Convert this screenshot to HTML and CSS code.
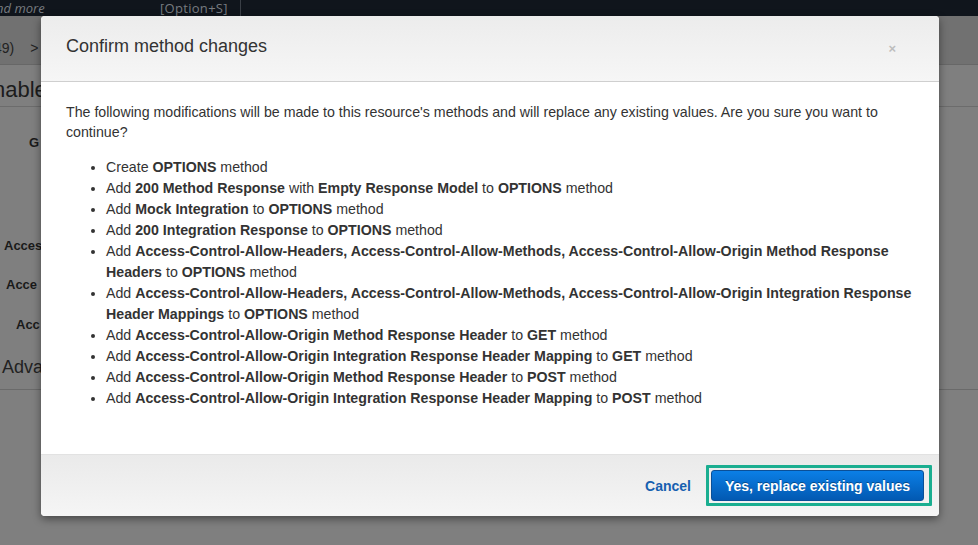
FILE: index.html
```html
<!DOCTYPE html>
<html>
<head>
<meta charset="utf-8">
<link rel="stylesheet" href="styles.css">
</head>
<body>
<div class="page">
  <div class="topbar">
    <span class="search-hint">nd more</span>
    <span class="shortcut">[Option+S]</span>
    <span class="divider"></span>
  </div>
  <div class="crumbs"><span>49)</span><span class="sep">&gt;</span></div>
  <div class="content">
    <div class="page-title">nable</div>
    <div class="form">
      <div class="row r1">G</div>
      <div class="row r2">Acces</div>
      <div class="row r3">Acce</div>
      <div class="row r4">Acc</div>
      <div class="adv">Adva</div>
    </div>
  </div>
</div>

<div class="modal">
  <div class="modal-header">
    <h2 class="modal-title">Confirm method changes</h2>
    <span class="close">×</span>
  </div>
  <div class="modal-body">
    <p>The following modifications will be made to this resource's methods and will replace any existing values. Are you sure you want to continue?</p>
    <ul>
      <li>Create <b>OPTIONS</b> method</li>
      <li>Add <b>200 Method Response</b> with <b>Empty Response Model</b> to <b>OPTIONS</b> method</li>
      <li>Add <b>Mock Integration</b> to <b>OPTIONS</b> method</li>
      <li>Add <b>200 Integration Response</b> to <b>OPTIONS</b> method</li>
      <li>Add <b>Access-Control-Allow-Headers, Access-Control-Allow-Methods, Access-Control-Allow-Origin Method Response Headers</b> to <b>OPTIONS</b> method</li>
      <li>Add <b>Access-Control-Allow-Headers, Access-Control-Allow-Methods, Access-Control-Allow-Origin Integration Response Header Mappings</b> to <b>OPTIONS</b> method</li>
      <li>Add <b>Access-Control-Allow-Origin Method Response Header</b> to <b>GET</b> method</li>
      <li>Add <b>Access-Control-Allow-Origin Integration Response Header Mapping</b> to <b>GET</b> method</li>
      <li>Add <b>Access-Control-Allow-Origin Method Response Header</b> to <b>POST</b> method</li>
      <li>Add <b>Access-Control-Allow-Origin Integration Response Header Mapping</b> to <b>POST</b> method</li>
    </ul>
  </div>
  <div class="modal-footer">
    <a class="cancel">Cancel</a>
    <div class="focus-ring"><button class="primary">Yes, replace existing values</button></div>
  </div>
</div>
</body>
</html>
```

FILE: styles.css
```css
* { box-sizing: border-box; }
html, body { margin: 0; padding: 0; }
body {
  width: 978px;
  height: 545px;
  overflow: hidden;
  background: #7f7f7f;
  font-family: "Liberation Sans", Arial, sans-serif;
  position: relative;
}
.page { display: flex; flex-direction: column; height: 545px; }
.topbar {
  height: 16px;
  background: #10151c;
  display: flex;
  align-items: center;
  font-family: "Open Sans", "Liberation Sans", sans-serif;
  font-size: 13px;
  color: #777b80;
  overflow: hidden;
}
.search-hint { font-style: italic; margin-left: -4px; width: 164px; white-space: nowrap; }
.shortcut { width: 80px; white-space: nowrap; letter-spacing: 0.3px; }
.divider { width: 1px; height: 16px; background: #3a3f46; }
.crumbs {
  height: 49px;
  background: #717171;
  border-bottom: 1px solid #676767;
  display: flex;
  align-items: center;
  gap: 16px;
  font-size: 14px;
  color: #222;
  margin-left: -6px;
  padding-top: 15px;
}
.content { flex: 1; }
.page-title {
  font-size: 22px;
  color: #1c1c1c;
  margin-left: -7px;
  height: 42px;
  line-height: 50px;
  border-bottom: 1px solid #6c6c6c;
}
.row { font-weight: bold; font-size: 13px; color: #1a1a1a; height: 20px; line-height: 20px; }
.r1 { padding-left: 29px; margin-top: 26px; }
.r2 { padding-left: 4px; margin-top: 83px; }
.r3 { padding-left: 6px; margin-top: 19px; }
.r4 { padding-left: 16px; margin-top: 20px; }
.adv {
  font-size: 18px;
  color: #222;
  padding-left: 2px;
  margin-top: 20px;
  height: 24px;
  line-height: 24px;
  border-bottom: 1px solid #6a6a6a;
  padding-bottom: 10px;
  box-sizing: content-box;
}

.modal {
  position: absolute;
  left: 41px;
  top: 16px;
  width: 898px;
  height: 500px;
  background: #fff;
  border-radius: 4px;
  box-shadow: 0 3px 8px rgba(0,0,0,0.45);
  display: flex;
  flex-direction: column;
  color: #333;
}
.modal-header {
  height: 66px;
  border-bottom: 1px solid #cfcfcf;
  background: linear-gradient(#ececec, #f6f6f6);
  border-radius: 4px 4px 0 0;
  display: flex;
  align-items: center;
  justify-content: space-between;
  padding: 0 43px 0 25px;
}
.modal-title {
  margin: 0 0 4px 0;
  font-weight: normal;
  font-size: 18px;
  color: #333;
}
.close { color: #bdbdbd; font-size: 13px; font-weight: bold; }
.modal-body {
  flex: 1;
  padding: 21px 20px 0 25px;
  font-size: 14.2px;
}
.modal-body p { margin: 0; line-height: 19.5px; }
.modal-body ul { margin: 15px 0 0 0; padding-left: 40px; }
.modal-body li { line-height: 21px; }
.modal-body b { color: #333; }
.modal-footer {
  height: 62px;
  border-top: 1px solid #e2e2e2;
  background: linear-gradient(#eaeaea, #f5f5f5);
  border-radius: 0 0 4px 4px;
  display: flex;
  align-items: center;
  justify-content: flex-end;
  padding-right: 7px;
  gap: 15px;
}
.cancel { color: #1760b0; font-weight: bold; font-size: 14px; }
.focus-ring {
  border: 3px solid #1aae90;
  padding: 2px 5px 2px 2px;
  border-radius: 1px;
}
.primary {
  display: block;
  width: 213px;
  height: 31px;
  border: 1px solid #0a4f97;
  border-radius: 3px;
  background: linear-gradient(#0b7fe6, #0259b2);
  color: #fff;
  font-family: "Liberation Sans", Arial, sans-serif;
  font-weight: bold;
  font-size: 14px;
  text-shadow: 0 -1px 0 rgba(0,0,0,0.35);
  padding: 0;
}
```
